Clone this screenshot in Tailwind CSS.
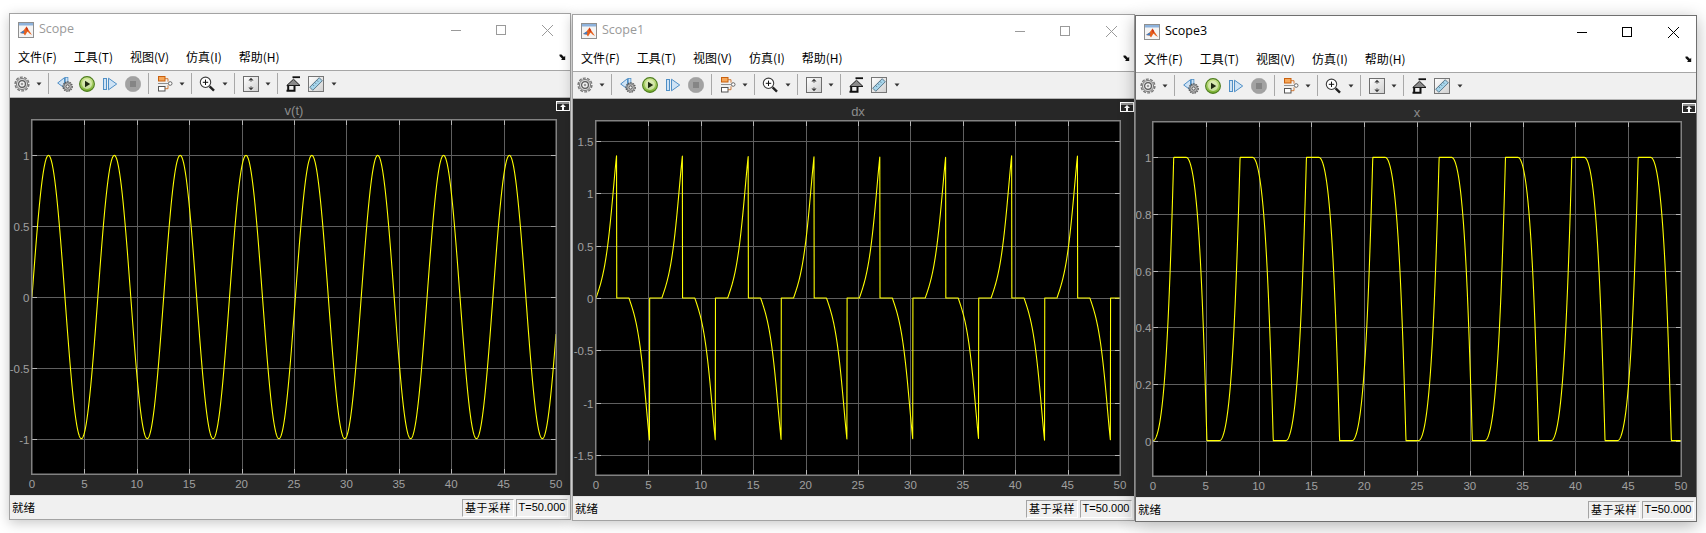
<!DOCTYPE html>
<html lang="zh">
<head>
<meta charset="utf-8">
<title>Scope</title>
<script src="https://cdn.jsdelivr.net/npm/@tailwindcss/browser@4"></script>
</head>
<body class="bg-white overflow-hidden">
<svg width="0" height="0" class="absolute">
  <defs>
    <linearGradient id="gp" x1="0" y1="0" x2="0" y2="1"><stop offset="0" stop-color="#d7ec9c"/><stop offset="1" stop-color="#74ad2a"/></linearGradient>
    <linearGradient id="gb" x1="0" y1="0" x2="1" y2="1"><stop offset="0" stop-color="#ffffff"/><stop offset="1" stop-color="#cfcfcf"/></linearGradient>
    <symbol id="i-logo" viewBox="0 0 16 16">
      <rect x=".5" y=".5" width="15" height="15" fill="#f4f4f4" stroke="#8f8f8f"/>
      <rect x="1" y="1" width="14" height="2.5" fill="#8db2dc"/>
      <path d="M2 11 L5.5 8.5 L8.5 4.5 L10 7 L14 13 L11.5 11.5 L9.5 9.5 L7 13.5 L5.5 11.5Z" fill="#e8601c"/>
      <path d="M2 11 L5.5 8.5 L6.5 10 L5.5 11.5Z" fill="#3f7fc4"/>
      <path d="M8.5 4.5 L10 7 L9.5 9.5 L8 7Z" fill="#c8341a"/>
    </symbol>
    <symbol id="i-gear" viewBox="0 0 16 16">
      <circle cx="8" cy="8" r="6.9" fill="none" stroke="#777" stroke-width="1.4" stroke-dasharray="3 1.3"/>
      <circle cx="8" cy="8" r="5.6" fill="#d4d4d4" stroke="#666" stroke-width=".8"/>
      <circle cx="8" cy="8" r="3.4" fill="#f2f2f2" stroke="#5a5a5a" stroke-width="1.2"/>
      <circle cx="8" cy="8" r="1.3" fill="#9a9a9a"/>
    </symbol>
    <symbol id="i-dd" viewBox="0 0 6 6"><path d="M.5 1.5H5.5L3 4.5Z" fill="#333"/></symbol>
    <symbol id="i-back" viewBox="0 0 16 16">
      <path d="M.7 7 L7.5 1.6 V12 Z" fill="#cfe3f5" stroke="#4f8fc6"/>
      <rect x="8.3" y="1.5" width="2.6" height="7" fill="#cfe3f5" stroke="#4f8fc6" stroke-width=".8"/>
      <circle cx="10.6" cy="10.5" r="4.6" fill="none" stroke="#555" stroke-width="1.3" stroke-dasharray="1.6 .7"/>
      <circle cx="10.6" cy="10.5" r="3.7" fill="#b9b9b9" stroke="#555" stroke-width=".6"/>
      <circle cx="10.6" cy="10.5" r="1.6" fill="#eee" stroke="#444" stroke-width=".8"/>
    </symbol>
    <symbol id="i-play" viewBox="0 0 16 16">
      <circle cx="8" cy="8" r="7.4" fill="url(#gp)" stroke="#4d7d1f" stroke-width="1.1"/>
      <circle cx="8" cy="8" r="5" fill="#e9f3cf" fill-opacity=".65"/>
      <path d="M6 4.7 L11.2 8 L6 11.3Z" fill="#1f2a12"/>
    </symbol>
    <symbol id="i-step" viewBox="0 0 16 16">
      <rect x="1.5" y="2.5" width="3" height="11" fill="#cfe3f5" stroke="#4f8fc6"/>
      <path d="M6.5 2.2 L14.7 8 L6.5 13.8Z" fill="#cfe3f5" stroke="#4f8fc6"/>
    </symbol>
    <symbol id="i-stop" viewBox="0 0 16 16">
      <circle cx="8" cy="8" r="7.8" fill="#a2a2a2" stroke="#959595" stroke-width=".4"/>
      <rect x="5" y="5" width="6" height="6" fill="#858585"/>
    </symbol>
    <symbol id="i-signal" viewBox="0 0 16 16">
      <rect x="1.5" y=".5" width="6.5" height="4.5" fill="#f6a85a" stroke="#c9600f"/>
      <rect x="1.5" y="10.5" width="6.5" height="4.5" fill="#fff" stroke="#555"/>
      <circle cx="13.2" cy="7.5" r="1.8" fill="#fff" stroke="#666"/>
      <path d="M8 2.7H11V5.7M8 12.7H11V9.3" fill="none" stroke="#c9600f" stroke-width=".8"/>
      <path d="M1 7.5H11" stroke="#777" stroke-width=".8"/>
    </symbol>
    <symbol id="i-zoom" viewBox="0 0 16 16">
      <circle cx="6.5" cy="6.3" r="5.2" fill="#fff" stroke="#3d3d3d" stroke-width="1.1"/>
      <path d="M6.5 3.6V9M3.8 6.3H9.2" stroke="#111" stroke-width="1"/>
      <path d="M10.6 10.4L15 14.7" stroke="#222" stroke-width="2.4"/>
    </symbol>
    <symbol id="i-scale" viewBox="0 0 16 16">
      <rect x=".5" y=".5" width="15" height="15" fill="url(#gb)" stroke="#6e6e6e"/>
      <path d="M8 1.8 L10.6 4.6H5.4Z M8 14.2 L10.6 11.4H5.4Z" fill="#3a3a3a"/>
      <path d="M8 4.6V6M8 10V11.4" stroke="#777"/>
    </symbol>
    <symbol id="i-stair" viewBox="0 0 16 16">
      <path d="M1.5 14.7H9.5V9.5M3.2 14V9.5" fill="none" stroke="#111" stroke-width="2"/>
      <path d="M1.8 9.5 L8.5 3.2 L15 9.5Z" fill="#8a8a8a" stroke="#1a1a1a" stroke-width="1"/>
      <path d="M7.5 1.2H15" stroke="#111" stroke-width="1.8"/>
    </symbol>
    <symbol id="i-ruler" viewBox="0 0 16 16">
      <rect x=".5" y=".5" width="15" height="15" fill="url(#gb)" stroke="#767676"/>
      <path d="M1.7 11.2 L11.2 1.7 L14.3 4.8 L4.8 14.3Z" fill="#a6d4ea" stroke="#3f5f73" stroke-width=".8"/>
      <path d="M4.5 8.4L6 9.9M6.6 6.3L8.1 7.8M8.7 4.2L10.2 5.7" stroke="#3f5f73" stroke-width=".7"/>
    </symbol>
    <symbol id="i-corner" viewBox="0 0 8 8">
      <path d="M.5 1.5 H2.5 L5 4 L6.2 2.8 V7 H2 L3.2 5.8 L.5 3Z" fill="#111"/>
    </symbol>
    <symbol id="i-undock" viewBox="0 0 14 10">
      <rect x=".5" y=".5" width="13" height="9" fill="none" stroke="#fff"/>
      <path d="M1 2H13" stroke="#fff"/>
      <path d="M7 3 L10 6H8V9H6V6H4Z" fill="#fff"/>
    </symbol>
  </defs>
</svg>

<template id="chrome-menu">
  <div class="h-[25px] shrink-0 flex items-center gap-[17px] pl-[8px] pb-[1px] bg-white text-[12px] text-black relative font-['Noto_Sans_CJK_SC','Noto_Sans',sans-serif]">
    <span>文件(F)</span><span>工具(T)</span><span>视图(V)</span><span>仿真(I)</span><span>帮助(H)</span>
    <svg class="absolute right-[3px] top-[8px] w-[8px] h-[8px]"><use href="#i-corner"/></svg>
  </div>
  <div class="h-[28px] shrink-0 flex items-center pl-[4px] pb-[1px] bg-[#f0f0f0] border-t border-b border-t-[#a6a6a6] border-b-[#b4b4b4]">
    <svg class="w-[16px] h-[16px]"><use href="#i-gear"/></svg>
    <svg class="ml-[6px] w-[6px] h-[6px]"><use href="#i-dd"/></svg>
    <div class="ml-[6px] w-px h-[21px] bg-[#a8a8a8]"></div>
    <svg class="ml-[8px] w-[16px] h-[16px]"><use href="#i-back"/></svg>
    <svg class="ml-[6px] w-[16px] h-[16px]"><use href="#i-play"/></svg>
    <svg class="ml-[7px] w-[16px] h-[16px]"><use href="#i-step"/></svg>
    <svg class="ml-[7px] w-[16px] h-[16px]"><use href="#i-stop"/></svg>
    <div class="ml-[7px] w-px h-[21px] bg-[#a8a8a8]"></div>
    <svg class="ml-[8px] w-[16px] h-[16px]"><use href="#i-signal"/></svg>
    <svg class="ml-[6px] w-[6px] h-[6px]"><use href="#i-dd"/></svg>
    <div class="ml-[6px] w-px h-[21px] bg-[#a8a8a8]"></div>
    <svg class="ml-[7px] w-[16px] h-[16px]"><use href="#i-zoom"/></svg>
    <svg class="ml-[7px] w-[6px] h-[6px]"><use href="#i-dd"/></svg>
    <div class="ml-[6px] w-px h-[21px] bg-[#a8a8a8]"></div>
    <svg class="ml-[8px] w-[16px] h-[16px]"><use href="#i-scale"/></svg>
    <svg class="ml-[6px] w-[6px] h-[6px]"><use href="#i-dd"/></svg>
    <div class="ml-[6px] w-px h-[21px] bg-[#a8a8a8]"></div>
    <svg class="ml-[7px] w-[16px] h-[16px]"><use href="#i-stair"/></svg>
    <svg class="ml-[7px] w-[16px] h-[16px]"><use href="#i-ruler"/></svg>
    <svg class="ml-[7px] w-[6px] h-[6px]"><use href="#i-dd"/></svg>
  </div>
</template>

<template id="chrome-status">
  <div class="h-[24px] shrink-0 flex items-center bg-[#f0f0f0] border-t border-t-[#e2e2e2] pr-[2px] text-[11px] text-black font-['Noto_Sans_CJK_SC','Noto_Sans',sans-serif]">
    <span class="ml-[2px] flex-1 text-[11.5px]">就绪</span>
    <div class="w-[52px] h-[18px] flex items-center justify-center tracking-[0.5px] border border-t-[#a4a4a4] border-l-[#a4a4a4] border-r-white border-b-white">基于采样</div>
    <div class="ml-[2px] w-[52px] h-[18px] flex items-center justify-center font-['Liberation_Sans',sans-serif] border border-t-[#a4a4a4] border-l-[#a4a4a4] border-r-white border-b-white">T=50.000</div>
  </div>
</template>

<div class="relative w-[1706px] h-[533px]">

  <section class="absolute left-[9px] top-[13px] w-[562px] h-[507px] flex flex-col bg-white border border-[#a3a3a3] shadow-[0_3px_12px_rgba(0,0,0,0.22)]">
    <header class="h-[31px] shrink-0 flex items-center bg-white">
      <svg class="ml-[8px] w-[16px] h-[16px]"><use href="#i-logo"/></svg>
      <span class="ml-[5px] flex-1 text-[12.5px] text-[#9a9a9a] font-['Open_Sans',sans-serif]">Scope</span>
      <svg class="w-[120px] h-[12px] mr-[3px]" viewBox="0 0 120 12" fill="none" stroke="#9a9a9a"><path d="M4 6.5H14"/><rect x="49.5" y="1.5" width="9" height="9"/><path d="M95 1L106 12M106 1L95 12"/></svg>
    </header>
    <div data-menu></div>
    <div class="flex-1 relative bg-[#272727] min-h-0" data-plot="v"></div>
    <div data-status></div>
  </section>

  <section class="absolute left-[572px] top-[14px] w-[563px] h-[507px] flex flex-col bg-white border border-[#a3a3a3] shadow-[0_3px_12px_rgba(0,0,0,0.22)]">
    <header class="h-[31px] shrink-0 flex items-center bg-white">
      <svg class="ml-[8px] w-[16px] h-[16px]"><use href="#i-logo"/></svg>
      <span class="ml-[5px] flex-1 text-[12.5px] text-[#9a9a9a] font-['Open_Sans',sans-serif]">Scope1</span>
      <svg class="w-[120px] h-[12px] mr-[3px]" viewBox="0 0 120 12" fill="none" stroke="#9a9a9a"><path d="M4 6.5H14"/><rect x="49.5" y="1.5" width="9" height="9"/><path d="M95 1L106 12M106 1L95 12"/></svg>
    </header>
    <div data-menu></div>
    <div class="flex-1 relative bg-[#272727] min-h-0" data-plot="dx"></div>
    <div data-status></div>
  </section>

  <section class="absolute left-[1135px] top-[15px] w-[562px] h-[507px] flex flex-col bg-white border border-[#6f6f6f] shadow-[0_4px_16px_rgba(0,0,0,0.3)]">
    <header class="h-[31px] shrink-0 flex items-center bg-white">
      <svg class="ml-[8px] w-[16px] h-[16px]"><use href="#i-logo"/></svg>
      <span class="ml-[5px] flex-1 text-[12.5px] text-black font-['Open_Sans',sans-serif]">Scope3</span>
      <svg class="w-[120px] h-[12px] mr-[3px]" viewBox="0 0 120 12" fill="none" stroke="#000"><path d="M4 6.5H14"/><rect x="49.5" y="1.5" width="9" height="9"/><path d="M95 1L106 12M106 1L95 12"/></svg>
    </header>
    <div data-menu></div>
    <div class="flex-1 relative bg-[#2a2a2a] min-h-0" data-plot="x"></div>
    <div data-status></div>
  </section>
</div>

<script>
  document.querySelectorAll('[data-menu]').forEach(function (el) {
    el.replaceWith(document.getElementById('chrome-menu').content.cloneNode(true));
  });
  document.querySelectorAll('[data-status]').forEach(function (el) {
    el.replaceWith(document.getElementById('chrome-status').content.cloneNode(true));
  });

  // hysteresis response driven by v(t) = sin(t)
  var dt = 0.005, x = 0, T = [], V = [], DX = [], X = [];
  for (var i = 0; i <= 10000; i++) {
    var t = i * dt, v = Math.sin(t), g = v > 0 ? 0.29 + 1.18 * x : 0.29 + 1.18 * (1 - x), d = v * g;
    if ((x >= 1 && d > 0) || (x <= 0 && d < 0)) d = 0;
    if (i % 4 === 0) { T.push(t); V.push(v); DX.push(d); X.push(x); }
    x = Math.min(1, Math.max(0, x + d * dt));
  }

  var cfg = {
    v:  { W: 560, gap: 2.5, title: 'v(t)', data: V,  L: 22, R: 14, lo: -1.25, hi: 1.25, ticks: [-1, -0.5, 0, 0.5, 1] },
    dx: { W: 561, gap: 2.5, title: 'dx',   data: DX, L: 23, R: 14, lo: -1.69, hi: 1.69, ticks: [-1.5, -1, -0.5, 0, 0.5, 1, 1.5] },
    x:  { W: 560, gap: 1.5, title: 'x',    data: X,  L: 17, R: 15, lo: -0.125, hi: 1.125, ticks: [0, 0.2, 0.4, 0.6, 0.8, 1] }
  };

  document.querySelectorAll('[data-plot]').forEach(function (host) {
    var c = cfg[host.dataset.plot], W = c.W, top = 22, H = 354;
    var l = c.L, r = W - c.R, b = top + H;
    var sx = function (t) { return l + (r - l) * t / 50; };
    var sy = function (y) { return b - H * (y - c.lo) / (c.hi - c.lo); };
    var s = '', k, p;
    s += '<rect x="' + l + '" y="' + top + '" width="' + (r - l) + '" height="' + H + '" fill="#000"/>';
    for (k = 0; k <= 10; k++) {
      p = Math.round(sx(k * 5)) + 0.5;
      if (k > 0 && k < 10) {
        s += '<path d="M' + p + ' ' + top + 'V' + b + '" stroke="#5f5f5f"/>';
        s += '<path d="M' + p + ' ' + top + 'v5M' + p + ' ' + b + 'v-5" stroke="#b8b8b8"/>';
      }
      s += '<text x="' + sx(k * 5) + '" y="' + (b + 14) + '" text-anchor="middle" fill="#a0a0a0" font-size="11.5" font-family="Liberation Sans, sans-serif">' + (k * 5) + '</text>';
    }
    c.ticks.forEach(function (y) {
      p = Math.round(sy(y)) + 0.5;
      s += '<path d="M' + l + ' ' + p + 'H' + r + '" stroke="#5f5f5f"/>';
      s += '<path d="M' + l + ' ' + p + 'h5M' + r + ' ' + p + 'h-5" stroke="#b8b8b8"/>';
      s += '<text x="' + (l - c.gap) + '" y="' + (p + 4) + '" text-anchor="end" fill="#a0a0a0" font-size="11.5" font-family="Liberation Sans, sans-serif">' + y + '</text>';
    });
    var pts = c.data.map(function (y, i) { return sx(T[i]).toFixed(2) + ',' + sy(y).toFixed(2); }).join(' ');
    s += '<polyline points="' + pts + '" fill="none" stroke="#ffff00" stroke-width="1.1" stroke-linejoin="round"/>';
    s += '<rect x="' + (l - 0.25) + '" y="' + (top - 0.25) + '" width="' + (r - l + 0.5) + '" height="' + (H + 0.5) + '" fill="none" stroke="#828282" stroke-width="1.5"/>';
    s += '<text x="' + ((l + r) / 2) + '" y="17" text-anchor="middle" fill="#8c8c8c" font-size="13" font-family="Liberation Sans, sans-serif">' + c.title + '</text>';
    host.innerHTML = '<svg width="' + W + '" height="397" class="block">' + s + '</svg>' +
      '<svg class="absolute top-[3px] right-[0px] w-[14px] h-[10px]"><use href="#i-undock"/></svg>';
  });
</script>
</body>
</html>
